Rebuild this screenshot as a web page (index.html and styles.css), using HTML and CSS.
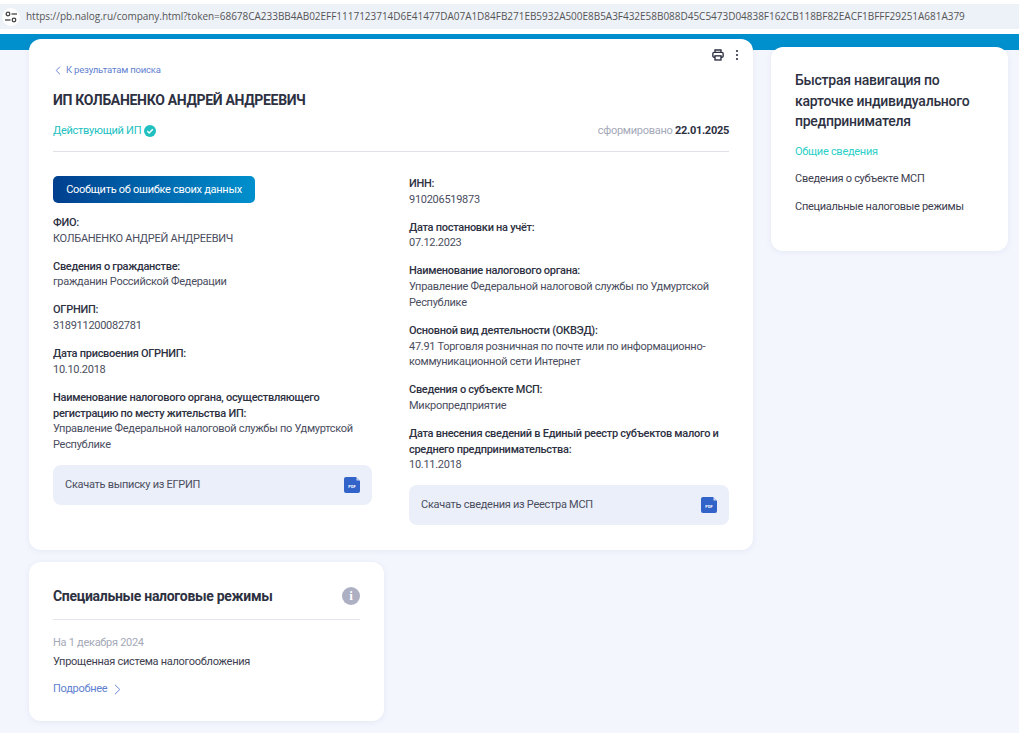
FILE: index.html
```html
<!DOCTYPE html>
<html>
    <head>
        <meta http-equiv="Content-Type" content="text/html; charset=UTF-8">
        <title>Карточка ИП</title>
        <link rel="stylesheet" href="styles.css">
    </head>
    <body>
        <!-- browser address bar -->
        <div class="browser-bar">
            <div class="url-box">
                <span class="site-btn">
                    <svg width="14" height="14" viewBox="0 0 14 14" fill="none" stroke="#444" stroke-width="1.3">
                        <circle cx="4" cy="4" r="1.8"/>
                        <path d="M7.5 4H13"/>
                        <circle cx="10" cy="10" r="1.8"/>
                        <path d="M1 10H6.5"/>
                    </svg>
                </span>
                <span class="url-text">https://pb.nalog.ru/company.html?token=68678CA233BB4AB02EFF1117123714D6E41477DA07A1D84FB271EB5932A500E8B5A3F432E58B088D45C5473D04838F162CB118BF82EACF1BFFF29251A681A379</span>
            </div>
        </div>

        <div class="page">
            <div class="main-col">
                <div class="card company-card">
                    <div class="tools">
                        <svg width="12" height="12" viewBox="0 0 14 14" fill="none" stroke="#2d3142" stroke-width="1.6">
                            <path d="M3.5 4V1.2H10.5V4"/>
                            <rect x="1" y="4" width="12" height="5.6" rx="1.4"/>
                            <rect x="3.5" y="8" width="7" height="4.8" fill="#fff"/>
                        </svg>
                        <svg width="4" height="12" viewBox="0 0 4 12" fill="#2d3142">
                            <circle cx="2" cy="2" r="1.1"/>
                            <circle cx="2" cy="6" r="1.1"/>
                            <circle cx="2" cy="10" r="1.1"/>
                        </svg>
                    </div>
                    <a class="back-link">
                        <svg width="6" height="9" viewBox="0 0 6 9" fill="none" stroke="#6c86d6" stroke-width="1">
                            <path d="M5 .7L1.2 4.5 5 8.3"/>
                        </svg>
                        К результатам поиска
                    </a>
                    <h1>ИП КОЛБАНЕНКО АНДРЕЙ АНДРЕЕВИЧ</h1>
                    <div class="status-row">
                        <div class="status">
                            Действующий ИП
                            <svg width="12" height="12" viewBox="0 0 12 12">
                                <circle cx="6" cy="6" r="6" fill="#20bfc0"/>
                                <path d="M3.3 6.1L5.2 8 8.8 4.3" fill="none" stroke="#fff" stroke-width="1.4"/>
                            </svg>
                        </div>
                        <div class="formed">сформировано <b>22.01.2025</b></div>
                    </div>

                    <div class="columns">
                        <div class="col">
                            <button class="report-btn">Сообщить об ошибке своих данных</button>
                            <div class="field">
                                <div class="label">ФИО:</div>
                                <div>КОЛБАНЕНКО АНДРЕЙ АНДРЕЕВИЧ</div>
                            </div>
                            <div class="field">
                                <div class="label">Сведения о гражданстве:</div>
                                <div>гражданин Российской Федерации</div>
                            </div>
                            <div class="field">
                                <div class="label">ОГРНИП:</div>
                                <div>318911200082781</div>
                            </div>
                            <div class="field">
                                <div class="label">Дата присвоения ОГРНИП:</div>
                                <div>10.10.2018</div>
                            </div>
                            <div class="field">
                                <div class="label">Наименование налогового органа, осуществляющего регистрацию по месту жительства ИП:</div>
                                <div>Управление Федеральной налоговой службы по Удмуртской Республике</div>
                            </div>
                            <a class="download">
                                Скачать выписку из ЕГРИП
                                <svg class="pdf" width="16" height="16" viewBox="0 0 16 16">
                                    <path d="M2 0H12L16 4V14a2 2 0 0 1-2 2H2a2 2 0 0 1-2-2V2a2 2 0 0 1 2-2z" fill="#3263c9"/>
                                    <path d="M12.5 .5L15.5 3.5H12.5z" fill="#cfdaf3"/>
                                    <text x="8" y="10.5" text-anchor="middle" class="pdf-text">PDF</text>
                                </svg>
                            </a>
                        </div>
                        <div class="col">
                            <div class="field">
                                <div class="label">ИНН:</div>
                                <div>910206519873</div>
                            </div>
                            <div class="field">
                                <div class="label">Дата постановки на учёт:</div>
                                <div>07.12.2023</div>
                            </div>
                            <div class="field">
                                <div class="label">Наименование налогового органа:</div>
                                <div>Управление Федеральной налоговой службы по Удмуртской Республике</div>
                            </div>
                            <div class="field">
                                <div class="label">Основной вид деятельности (ОКВЭД):</div>
                                <div>47.91 Торговля розничная по почте или по информационно-коммуникационной сети Интернет</div>
                            </div>
                            <div class="field">
                                <div class="label">Сведения о субъекте МСП:</div>
                                <div>Микропредприятие</div>
                            </div>
                            <div class="field">
                                <div class="label">Дата внесения сведений в Единый реестр субъектов малого и среднего предпринимательства:</div>
                                <div>10.11.2018</div>
                            </div>
                            <a class="download">
                                Скачать сведения из Реестра МСП
                                <svg class="pdf" width="16" height="16" viewBox="0 0 16 16">
                                    <path d="M2 0H12L16 4V14a2 2 0 0 1-2 2H2a2 2 0 0 1-2-2V2a2 2 0 0 1 2-2z" fill="#3263c9"/>
                                    <path d="M12.5 .5L15.5 3.5H12.5z" fill="#cfdaf3"/>
                                    <text x="8" y="10.5" text-anchor="middle" class="pdf-text">PDF</text>
                                </svg>
                            </a>
                        </div>
                    </div>
                </div>

                <div class="card tax-card">
                    <div class="tax-head">
                        <h2>Специальные налоговые режимы</h2>
                        <span class="info">i</span>
                    </div>
                    <div class="tax-date">На 1 декабря 2024</div>
                    <div class="tax-name">Упрощенная система налогообложения</div>
                    <a class="more">
                        Подробнее
                        <svg width="7" height="11" viewBox="0 0 7 11" fill="none" stroke="#6c86d6" stroke-width="1">
                            <path d="M1 .8L5.8 5.5 1 10.2"/>
                        </svg>
                    </a>
                </div>
            </div>

            <div class="card side-card">
                <h3>Быстрая навигация по карточке индивидуального предпринимателя</h3>
                <a class="nav-item active">Общие сведения</a>
                <a class="nav-item">Сведения о субъекте МСП</a>
                <a class="nav-item">Специальные налоговые режимы</a>
            </div>
        </div>
    </body>
</html>
```

FILE: styles.css
```css
* {
    box-sizing: border-box;
}
html, body {
    height: 100%;
}
body {
    margin: 0;
    font-family: Roboto, "Liberation Sans", sans-serif;
    font-size: 11px;
    letter-spacing: -0.28px;
    line-height: 15.7px;
    color: #4a4d5e;
    background-color: #f3f6fd;
    overflow: hidden;
}

/* Browser bar */
.browser-bar {
    height: 34px;
    padding-top: 4px;
    background-color: #fff;
}
.url-box {
    display: flex;
    align-items: center;
    height: 25px;
    background-color: #edf1f8;
    white-space: nowrap;
    overflow: hidden;
}
.site-btn {
    display: flex;
    align-items: center;
    justify-content: center;
    flex: none;
    width: 18px;
    height: 18px;
    margin: 0 6px 0 2px;
    border-radius: 50%;
    background-color: #fff;
}
.url-text {
    font-family: "Open Sans", "Liberation Sans", sans-serif;
    font-size: 10px;
    letter-spacing: -0.025px;
    color: #555;
}

/* Page */
.page {
    display: flex;
    align-items: flex-start;
    gap: 18px;
    padding: 5px 11px 0 29px;
    background: linear-gradient(#0090cd 16px, transparent 16px);
}
.main-col {
    width: 724px;
}
.card {
    background-color: #fff;
    border-radius: 12px;
    box-shadow: 0 1px 6px rgba(60, 80, 140, 0.08);
}

.company-card {
    position: relative;
    height: 511px;
    padding: 24px 24px 0;
}
.tools {
    position: absolute;
    top: 10px;
    right: 14px;
    display: flex;
    align-items: center;
    gap: 11px;
}
.back-link {
    display: flex;
    align-items: center;
    gap: 5px;
    padding-left: 2px;
    font-size: 9.5px;
    letter-spacing: -0.2px;
    line-height: 14px;
    color: #5f7fd0;
}
h1 {
    margin: 13px 0 0;
    font-size: 14px;
    letter-spacing: -0.32px;
    line-height: 20px;
    font-weight: 700;
    color: #2d3142;
}
.status-row {
    display: flex;
    justify-content: space-between;
    align-items: center;
    height: 42px;
    padding-top: 1px;
    border-bottom: 1px solid #dfe1e7;
}
.status {
    display: flex;
    align-items: center;
    gap: 3px;
    color: #20bfc0;
}
.formed {
    color: #a5a9b8;
}
.formed b {
    font-weight: 700;
    color: #2d3142;
}

.columns {
    display: flex;
    gap: 37px;
}
.col {
    flex: 1;
    width: 320px;
    padding-top: 24px;
}
.col:first-child {
    width: 319px;
    flex: none;
}
.report-btn {
    display: block;
    width: 202px;
    height: 27px;
    margin-bottom: 12px;
    border: none;
    border-radius: 5px;
    background: linear-gradient(to right, #003f8e, #0090cd);
    font-family: inherit;
    font-size: 11px;
    letter-spacing: -0.28px;
    white-space: nowrap;
    color: #fff;
}
.field {
    margin-bottom: 12.3px;
}
.label {
    font-weight: 500;
    color: #2d3142;
}
.download {
    display: flex;
    justify-content: space-between;
    align-items: center;
    height: 40px;
    padding: 0 12px;
    border-radius: 8px;
    background-color: #ebeff9;
}
.pdf {
    flex: none;
}
.pdf-text {
    font-size: 4px;
    letter-spacing: 0;
    font-weight: 700;
    fill: #fff;
}

/* Tax regime card */
.tax-card {
    width: 355px;
    height: 159px;
    margin-top: 12px;
    padding: 23px 24px 0;
}
.tax-head {
    display: flex;
    justify-content: space-between;
    align-items: center;
    height: 35px;
    padding-bottom: 12px;
    border-bottom: 1px solid #e4e6ed;
}
h2 {
    margin: 0;
    font-size: 14px;
    letter-spacing: -0.3px;
    line-height: 20px;
    font-weight: 700;
    color: #2d3142;
}
.info {
    display: flex;
    align-items: center;
    justify-content: center;
    width: 18px;
    height: 18px;
    border-radius: 50%;
    background-color: #adb0c2;
    font-family: "Liberation Serif", serif;
    font-size: 13px;
    font-weight: 700;
    color: #fff;
}
.tax-date {
    margin-top: 15px;
    color: #a5a9b8;
}
.tax-name {
    margin-top: 3px;
    color: #3d4050;
}
.more {
    display: flex;
    align-items: center;
    gap: 7px;
    margin-top: 12px;
    color: #5f7fd0;
}

/* Side navigation */
.side-card {
    width: 237px;
    height: 204px;
    margin-top: 8px;
    padding: 23px 24px 0;
}
h3 {
    margin: 0 0 12px;
    font-size: 14px;
    letter-spacing: -0.25px;
    line-height: 20.5px;
    font-weight: 500;
    color: #2d3142;
}
.nav-item {
    display: block;
    margin-bottom: 11.8px;
    color: #3d4050;
}
.nav-item.active {
    color: #2ccfc8;
}
```
